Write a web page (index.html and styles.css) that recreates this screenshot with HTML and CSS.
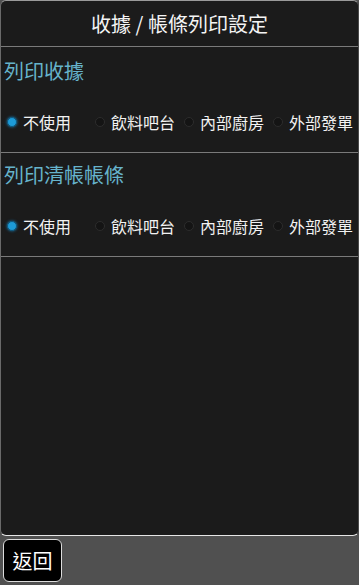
FILE: index.html
```html
<!DOCTYPE html>
<html lang="zh-Hant">
<head>
<meta charset="utf-8">
<title>收據 / 帳條列印設定</title>
<link rel="stylesheet" href="styles.css">
</head>
<body>
<div class="app">
  <div class="panel">
    <div class="header">收據 / 帳條列印設定</div>
    <div class="sections">
      <div class="section">
        <div class="section-title">列印收據</div>
        <div class="options">
          <div class="option"><span class="radio checked"></span><span class="label">不使用</span></div>
          <div class="option"><span class="radio"></span><span class="label">飲料吧台</span></div>
          <div class="option"><span class="radio"></span><span class="label">內部廚房</span></div>
          <div class="option"><span class="radio"></span><span class="label">外部發單</span></div>
        </div>
      </div>
      <div class="section">
        <div class="section-title">列印清帳帳條</div>
        <div class="options">
          <div class="option"><span class="radio checked"></span><span class="label">不使用</span></div>
          <div class="option"><span class="radio"></span><span class="label">飲料吧台</span></div>
          <div class="option"><span class="radio"></span><span class="label">內部廚房</span></div>
          <div class="option"><span class="radio"></span><span class="label">外部發單</span></div>
        </div>
      </div>
    </div>
  </div>
  <div class="bottom-bar">
    <div class="back-btn">返回</div>
  </div>
</div>
</body>
</html>
```

FILE: styles.css
```css
html, body {
  margin: 0;
  padding: 0;
  background: #505050;
}
body {
  font-family: "Noto Sans CJK TC", "Noto Sans", sans-serif;
  color: #f2f2f2;
}
.app {
  width: 359px;
  height: 585px;
  display: flex;
  flex-direction: column;
}
.panel {
  box-sizing: border-box;
  height: 536px;
  width: 359px;
  background: #1b1b1b;
  border-top: 1px solid #9a9a9a;
  border-left: 1px solid #6a6a6a;
  border-right: 1px solid #4a4a4a;
  border-bottom: 1px solid #e6e6e6;
  border-radius: 6px;
}
.header {
  height: 45px;
  line-height: 45px;
  text-align: center;
  font-size: 20px;
  color: #f4f4f4;
  border-bottom: 1px solid #7a7a7a;
}
.sections {
  padding-top: 2px;
}
.section {
  border-bottom: 1px solid #7a7a7a;
}
.section-title {
  height: 44px;
  line-height: 44px;
  font-size: 20px;
  color: #66b3cb;
  padding-left: 3px;
}
.options {
  display: grid;
  grid-template-columns: 88px 89px 89px 89px;
  padding: 19px 0 20px 6px;
}
.option {
  display: flex;
  align-items: center;
  height: 20px;
  white-space: nowrap;
}
.radio {
  box-sizing: border-box;
  width: 10px;
  height: 10px;
  border-radius: 50%;
  background: #141414;
  border: 1px solid #2c2c2c;
  margin-right: 6px;
  flex: none;
}
.radio.checked {
  background: #1d9bd8;
  border: 1px solid #10567a;
  box-shadow: 0 0 3px #1a7fb5;
}
.label {
  font-size: 16px;
  line-height: 20px;
  color: #f2f2f2;
}
.bottom-bar {
  flex: 1;
  background: #505050;
  padding: 3px;
}
.back-btn {
  box-sizing: border-box;
  width: 59px;
  height: 43px;
  background: #000;
  border: 1px solid #dcdcdc;
  border-radius: 6px;
  color: #fff;
  font-size: 20px;
  line-height: 41px;
  text-align: center;
}
```
